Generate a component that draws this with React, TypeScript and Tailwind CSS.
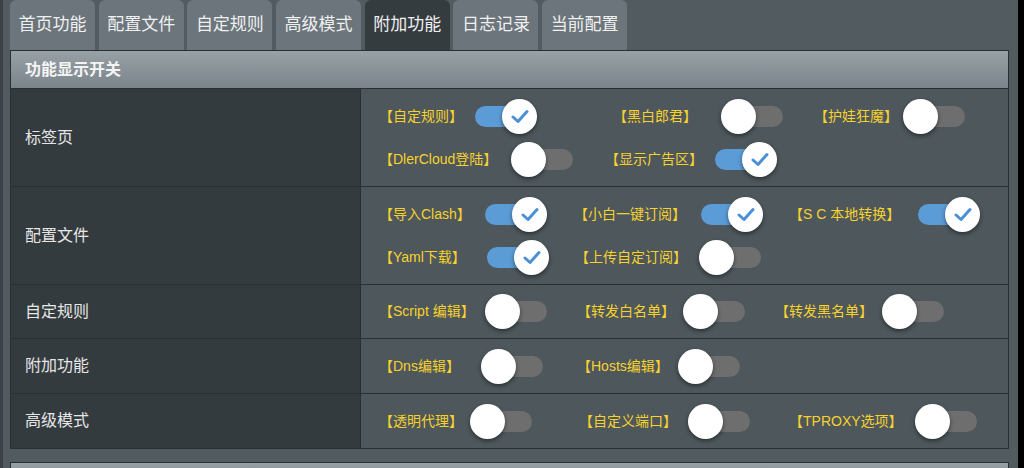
import React from "react";

type Item = { t: string; on: boolean; w: string; mr?: string };
type Row = { label: string; lines: Item[][]; pad: string };

const tabs = ["首页功能", "配置文件", "自定规则", "高级模式", "附加功能", "日志记录", "当前配置"];

const rows: Row[] = [
  {
    label: "标签页",
    pad: "pt-[6px] pb-[5px]",
    lines: [
      [
        { t: "【自定规则】", on: true, w: "w-[96px]", mr: "mr-[76px]" },
        { t: "【黑白郎君】", on: false, w: "w-[108px]", mr: "mr-[31px]" },
        { t: "【护娃狂魔】", on: false, w: "w-[89px]" },
      ],
      [
        { t: "【DlerCloud登陆】", on: false, w: "w-[132px]", mr: "mr-[32px]" },
        { t: "【显示广告区】", on: true, w: "w-[110px]" },
      ],
    ],
  },
  {
    label: "配置文件",
    pad: "pt-[6px] pb-[5px]",
    lines: [
      [
        { t: "【导入Clash】", on: true, w: "w-[106px]", mr: "mr-[27px]" },
        { t: "【小白一键订阅】", on: true, w: "w-[127px]", mr: "mr-[26px]" },
        { t: "【S C 本地转换】", on: true, w: "w-[129px]" },
      ],
      [
        { t: "【Yaml下载】", on: true, w: "w-[108px]", mr: "mr-[26px]" },
        { t: "【上传自定订阅】", on: false, w: "w-[124px]" },
      ],
    ],
  },
  {
    label: "自定规则",
    pad: "py-[5px]",
    lines: [
      [
        { t: "【Script 编辑】", on: false, w: "w-[106px]", mr: "mr-[30px]" },
        { t: "【转发白名单】", on: false, w: "w-[106px]", mr: "mr-[30px]" },
        { t: "【转发黑名单】", on: false, w: "w-[107px]" },
      ],
    ],
  },
  {
    label: "附加功能",
    pad: "pt-[6px] pb-[5px]",
    lines: [
      [
        { t: "【Dns编辑】", on: false, w: "w-[102px]", mr: "mr-[34px]" },
        { t: "【Hosts编辑】", on: false, w: "w-[101px]" },
      ],
    ],
  },
  {
    label: "高级模式",
    pad: "pt-[6px] pb-[5px]",
    lines: [
      [
        { t: "【透明代理】", on: false, w: "w-[91px]", mr: "mr-[47px]" },
        { t: "【自定义端口】", on: false, w: "w-[109px]", mr: "mr-[39px]" },
        { t: "【TPROXY选项】", on: false, w: "w-[126px]" },
      ],
    ],
  },
];

function Toggle({ on }: { on: boolean }) {
  return (
    <div className="relative h-[35px] w-[62px] shrink-0">
      <div
        className={`absolute left-0 right-0 top-[7px] h-[21px] rounded-full ${
          on ? "bg-[#5b9bd6]" : "bg-[#6e6e6e]"
        }`}
      />
      <div
        className={`absolute top-0 flex h-[35px] w-[35px] items-center justify-center rounded-full bg-white shadow-[0_2px_4px_rgba(0,0,0,0.45)] ${
          on ? "right-0" : "left-0"
        }`}
      >
        {on && (
          <svg width="18" height="15" viewBox="0 0 18 15" fill="none">
            <path
              d="M2 8 L7 12.5 L16 2.5"
              stroke="#4b8fd6"
              strokeWidth="3"
              strokeLinecap="round"
              strokeLinejoin="round"
            />
          </svg>
        )}
      </div>
    </div>
  );
}

export default function App() {
  return (
    <div
      className="flex h-[468px] w-[1024px] overflow-hidden bg-[#525b5f]"
      style={{ fontFamily: '"Liberation Sans", "Noto Sans CJK SC", sans-serif' }}
    >
      <div className="w-[3px] shrink-0 bg-[#3b4144]" />
      <div className="ml-[7px] w-[999px] shrink-0">
        <div className="flex h-[50px] gap-[3.7px]">
          {tabs.map((t, i) => (
            <div
              key={t}
              className={`flex w-[85px] items-center justify-center rounded-t-[6px] text-[17px] text-[#f0f0f0] ${
                i === 4 ? "bg-[#353c40]" : "bg-[#6b757b]"
              }`}
            >
              {t}
            </div>
          ))}
        </div>
        <div className="border border-[#2a2f33]">
          <div className="flex h-[38px] items-center border-b border-[#2a2f33] bg-gradient-to-b from-[#97a1a6] to-[#7a848a] pl-[14px] text-[16px] font-bold text-[#f4f4f4]">
            功能显示开关
          </div>
          {rows.map((r, ri) => (
            <div
              key={r.label}
              className={`flex ${ri < rows.length - 1 ? "border-b border-[#2a2f33]" : ""}`}
            >
              <div className="flex w-[350px] shrink-0 items-center border-r border-[#2a2f33] bg-[#343b3f] pl-[14px] text-[16px] text-[#e6e6e6]">
                {r.label}
              </div>
              <div className={`flex-1 bg-[#4d575c] pl-[18px] ${r.pad}`}>
                {r.lines.map((line, li) => (
                  <div key={li} className="flex h-[43px] items-center">
                    {line.map((it) => (
                      <div key={it.t} className={`flex items-center ${it.mr ?? ""}`}>
                        <span className={`${it.w} shrink-0 whitespace-nowrap text-[14px] text-[#f7d22e]`}>
                          {it.t}
                        </span>
                        <Toggle on={it.on} />
                      </div>
                    ))}
                  </div>
                ))}
              </div>
            </div>
          ))}
        </div>
        <div className="mt-[13px] h-[20px] border border-[#2a2f33] bg-gradient-to-b from-[#97a1a6] to-[#7a848a]" />
      </div>
      <div className="ml-[9px] w-[6px] shrink-0 bg-black" />
    </div>
  );
}
